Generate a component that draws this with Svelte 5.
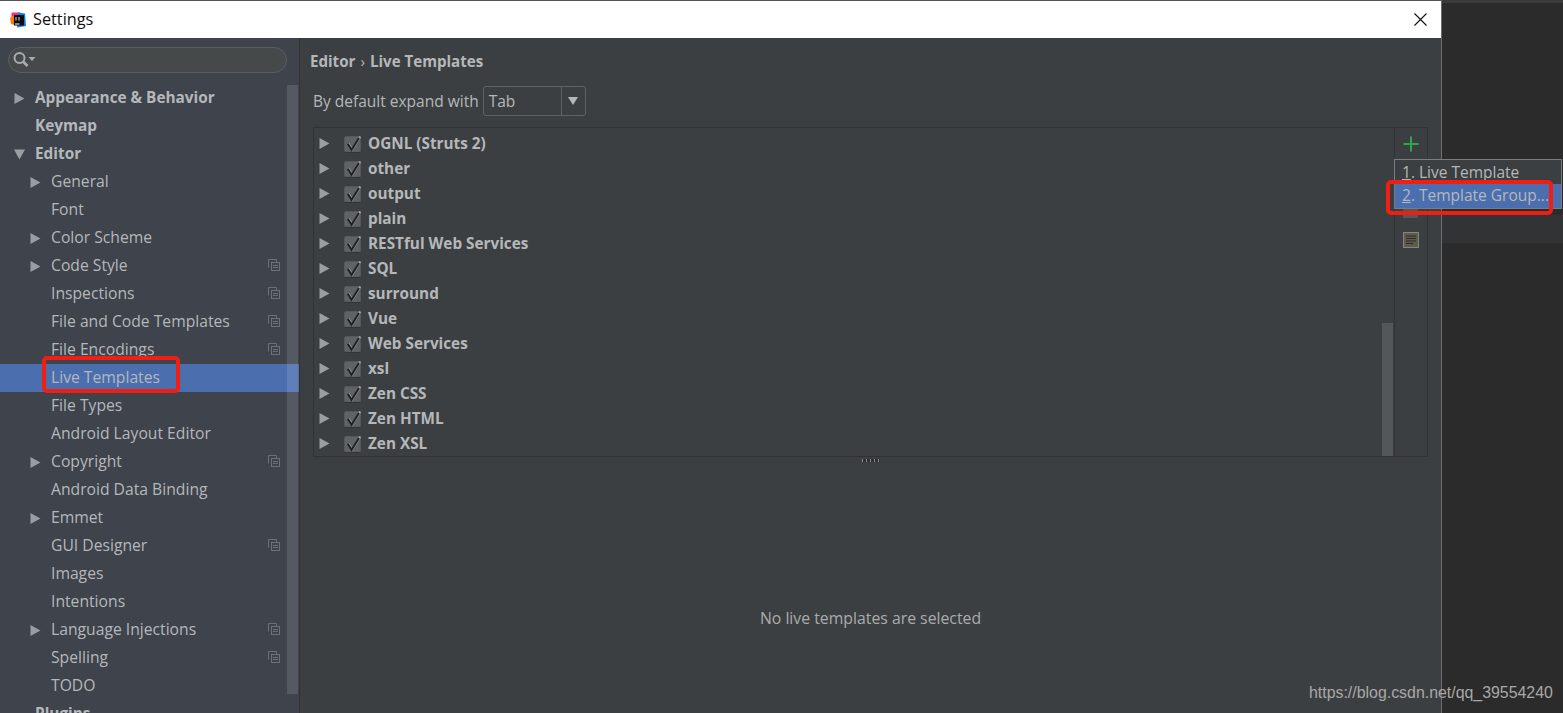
<script>
  const nav = [
    { t: 'Appearance & Behavior', lvl: 0, arrow: 'r', bold: true },
    { t: 'Keymap', lvl: 0, bold: true },
    { t: 'Editor', lvl: 0, arrow: 'd', bold: true },
    { t: 'General', lvl: 1, arrow: 'r' },
    { t: 'Font', lvl: 1 },
    { t: 'Color Scheme', lvl: 1, arrow: 'r' },
    { t: 'Code Style', lvl: 1, arrow: 'r', copy: true },
    { t: 'Inspections', lvl: 1, copy: true },
    { t: 'File and Code Templates', lvl: 1, copy: true },
    { t: 'File Encodings', lvl: 1, copy: true },
    { t: 'Live Templates', lvl: 1, sel: true },
    { t: 'File Types', lvl: 1 },
    { t: 'Android Layout Editor', lvl: 1 },
    { t: 'Copyright', lvl: 1, arrow: 'r', copy: true },
    { t: 'Android Data Binding', lvl: 1 },
    { t: 'Emmet', lvl: 1, arrow: 'r' },
    { t: 'GUI Designer', lvl: 1, copy: true },
    { t: 'Images', lvl: 1 },
    { t: 'Intentions', lvl: 1 },
    { t: 'Language Injections', lvl: 1, arrow: 'r', copy: true },
    { t: 'Spelling', lvl: 1, copy: true },
    { t: 'TODO', lvl: 1 },
    { t: 'Plugins', lvl: 0, bold: true }
  ];
  const groups = ['OGNL (Struts 2)', 'other', 'output', 'plain', 'RESTful Web Services', 'SQL', 'surround', 'Vue', 'Web Services', 'xsl', 'Zen CSS', 'Zen HTML', 'Zen XSL'];
</script>

<div class="screen">
  <div class="dialog">
    <header class="title">
      <svg class="logo" width="16" height="16" viewBox="0 0 16 16">
        <path d="M1.500 0.500 H10 V8 H1.500 Z" fill="#f5316f"/>
        <path d="M0 6 L4 3 L5 13 L1 12 Z" fill="#f97a12"/>
        <path d="M8 0.500 L15 1.500 L16 14 L7 15.500 Z" fill="#087cfa"/>
        <rect x="4" y="3" width="10" height="10.500" fill="#0c0c0c"/>
        <rect x="5" y="11.500" width="4.500" height="1" fill="#fff"/>
        <path d="M5.500 5h1v3.500h-1zM8.500 5h1v3.500h-1z" fill="#ddd"/>
      </svg>
      <span class="title-text">Settings</span>
      <svg class="close" width="13" height="13" viewBox="0 0 13 13"><path d="M0.500 0.500 L12.500 12.500 M12.500 0.500 L0.500 12.500" stroke="#111" stroke-width="1.100" fill="none"/></svg>
    </header>
    <div class="body">
      <aside class="side">
        <div class="search">
          <svg width="23" height="16" viewBox="0 0 23 16"><circle cx="6.500" cy="6" r="5" fill="none" stroke="#a9acb0" stroke-width="2"/><path d="M10 9.500 L14.500 14" stroke="#a9acb0" stroke-width="2.600"/><path d="M15.500 5 h7 l-3.500 4 z" fill="#a9acb0"/></svg>
        </div>
        <div class="tree">
          <nav class="rows">
            {#each nav as n}
              <div class="row" class:sel={n.sel} class:bold={n.bold} class:sub={n.lvl === 1}>
                {#if n.arrow}
                  <svg class="arr" width="11" height="11" viewBox="0 0 11 11">
                    {#if n.arrow === 'r'}<path d="M0.500 0 L10.500 5.500 L0.500 11 Z" fill="#9a9da1"/>{:else}<path d="M0 0.500 L11 0.500 L5.500 10.500 Z" fill="#9a9da1"/>{/if}
                  </svg>
                {/if}
                <span>{n.t}</span>
                {#if n.copy}
                  <svg class="copy" width="12" height="12" viewBox="0 0 12 12"><path d="M0.500 8.500 V0.500 H8.500 V3" fill="none" stroke="#6d7075"/><rect x="3.500" y="3.500" width="8" height="8" fill="none" stroke="#6d7075"/><path d="M5 6.500h5M5 8.500h5" stroke="#6d7075"/></svg>
                {/if}
              </div>
            {/each}
          </nav>
          <div class="side-scroll"></div>
        </div>
      </aside>
      <main class="main">
        <div class="crumbs"><b>Editor</b><i>›</i><b>Live Templates</b></div>
        <div class="expand">
          <span>By default expand with</span>
          <div class="combo"><span class="val">Tab</span><span class="btn"><svg width="10" height="8" viewBox="0 0 10 8"><path d="M0 0 H10 L5 8 Z" fill="#b4b7b9"/></svg></span></div>
        </div>
        <div class="panel">
          <div class="list">
            {#each groups as g}
              <div class="g">
                <svg class="garr" width="11" height="11" viewBox="0 0 11 11"><path d="M0.500 0 L10.500 5.500 L0.500 11 Z" fill="#9a9da1"/></svg>
                <svg class="cb" width="18" height="18" viewBox="0 0 18 18"><rect x="0.500" y="1.500" width="16" height="15.500" rx="1.500" fill="#606365" stroke="#55585a"/><path d="M1 17.500 H16" stroke="#333638"/><path d="M4.400 8.500 L8.200 14.500 L16.300 1.500" fill="none" stroke="#a4a6a8" stroke-width="2.200"/><path d="M3.800 8.800 L7.600 14.800 L15 3" fill="none" stroke="#1f2122" stroke-width="2"/></svg>
                <span>{g}</span>
              </div>
            {/each}
            <div class="list-scroll"></div>
          </div>
          <div class="tools">
            <svg class="plus" width="16" height="16" viewBox="0 0 16 16"><path d="M8 0.500 V15.500 M0.500 8 H15.500" stroke="#2aa84a" stroke-width="2"/></svg>
            <div class="peek"></div>
            <svg class="doc" width="16" height="16" viewBox="0 0 16 16"><rect x="0.500" y="0.500" width="15" height="15" fill="#5d5a4e" stroke="#85857c"/><path d="M3 4h10M3 6.500h10M3 9h10M3 11.500h7" stroke="#2c2c28"/></svg>
          </div>
        </div>
        <div class="splitter"><i></i></div>
        <div class="empty">No live templates are selected</div>
      </main>
    </div>
  </div>
  <div class="behind"><div class="band"></div></div>

  <div class="popup">
    <div class="item"><u>1</u>. Live Template</div>
    <div class="item on"><u>2</u>. Template Group...</div>
  </div>
  <div class="mark m1"></div>
  <div class="mark m2"></div>
  <div class="wm">https://blog.csdn.net/qq_39554240</div>
</div>

<style>
  :global(body) { margin: 0; background: #2b2b2b; overflow: hidden; }
  .screen { position: relative; display: flex; width: 1563px; height: 713px; overflow: hidden; font-family: "Open Sans", "Noto Sans", sans-serif; font-size: 15.700px; color: #b5b8ba; }
  .dialog { width: 1441px; display: flex; flex-direction: column; border-top: 1px solid #555; border-right: 1px solid #6b6e70; flex: none; }
  .title { height: 37px; background: #fff; display: flex; align-items: center; padding: 0 14px 0 10px; flex: none; color: #111; }
  .logo { margin-right: 7px; }
  .title-text { font-size: 16.300px; flex: 1; padding-bottom: 2px; }
  .close { margin-bottom: 1px; }
  .body { flex: 1; display: flex; min-height: 0; }
  .side { width: 299px; background: #3e434c; border-right: 1px solid #333; flex: none; display: flex; flex-direction: column; }
  .search { margin: 9px 12px 0 8px; height: 24px; border: 1px solid #5b5f61; border-radius: 13px; background: #45494a; display: flex; align-items: center; padding-left: 4px; }
  .tree { position: relative; flex: 1; min-height: 0; overflow: hidden; margin-top: 10px; }
  .rows { padding-top: 1px; }
  .row { position: relative; height: 28px; display: flex; align-items: center; padding-left: 35px; }
  .row span { padding-bottom: 2px; }
  .row.sub { padding-left: 51px; }
  .row.bold { font-weight: 700; font-size: 15.350px; }
  .row.sel { background: #4b6eaf; }
  .arr { position: absolute; left: 14px; top: 9px; }
  .row.sub .arr { left: 30px; }
  .copy { position: absolute; left: 268px; top: 7px; }
  .side-scroll { position: absolute; left: 287px; top: 2px; width: 11px; height: 609px; background: rgba(255,255,255,0.12); }
  .main { flex: 1; background: #3c3f41; display: flex; flex-direction: column; padding: 0 13px; min-width: 0; }
  .crumbs { margin-left: -3px; height: 24px; margin-top: 11px; display: flex; align-items: center; gap: 5px; font-size: 15.100px; }
  .crumbs b { font-weight: 700; }
  .crumbs i { font-style: normal; }
  .expand { display: flex; align-items: center; gap: 4px; height: 30px; margin-top: 13px; font-size: 15.500px; }
  .combo { width: 101px; height: 28px; border: 1px solid #5f6264; border-radius: 3px; display: flex; align-items: center; }
  .val { flex: 1; padding-left: 5px; }
  .btn { width: 23px; height: 100%; border-left: 1px solid #5f6264; display: flex; align-items: center; justify-content: center; }
  .panel { margin-top: 11px; height: 328px; border: 1px solid #323232; display: flex; }
  .list { position: relative; flex: 1; padding-top: 3px; overflow: hidden; }
  .g { position: relative; height: 25px; display: flex; align-items: center; padding-left: 54px; font-weight: 700; font-size: 15.300px; }
  .g span { padding-bottom: 2px; }
  .garr { position: absolute; left: 5px; top: 7px; }
  .cb { position: absolute; left: 30px; top: 4px; }
  .list-scroll { position: absolute; right: 1px; bottom: 0; width: 11px; height: 133px; background: #54575a; }
  .tools { position: relative; width: 32px; border-left: 1px solid #323232; display: flex; flex-direction: column; align-items: center; padding-top: 8px; }
  .peek { position: absolute; left: 8px; top: 78px; width: 15px; height: 12px; background: #55585a; }
  .doc { margin-top: 80px; }
  .splitter { height: 7px; display: flex; justify-content: center; }
  .splitter i { width: 18px; height: 3px; margin-top: 2px; background: repeating-linear-gradient(90deg, #8a8c8e 0 1px, #2e3032 1px 4px); }
  .empty { flex: 1; display: flex; justify-content: center; padding-top: 143px; color: #a9acae; font-size: 15.800px; }
  .behind { flex: 1; background: #2b2b2b; position: relative; border-top: 3px solid #3a3b3c; }
  .band { position: absolute; left: 0; right: 0; top: 212px; height: 28px; background: #313335; }
  .popup { position: absolute; left: 1394px; top: 159px; width: 166px; height: 48px; border: 1px solid #7a7d7f; background: #3c3f41; font-size: 15.500px; }
  .item { height: 24px; line-height: 24px; padding-left: 7px; color: #b5b8ba; white-space: nowrap; overflow: hidden; }
  .item.on { background: #4b6eaf; line-height: 22px; }
  .mark { position: absolute; border: 4px solid #f11e14; border-radius: 5px; }
  .m1 { left: 42px; top: 356px; width: 130px; height: 29px; }
  .m2 { left: 1386px; top: 180px; width: 159px; height: 27px; }
  .wm { position: absolute; left: 1309px; top: 684px; font-family: "Liberation Sans", sans-serif; font-size: 15.900px; color: #a8a8a8; white-space: nowrap; }
</style>
